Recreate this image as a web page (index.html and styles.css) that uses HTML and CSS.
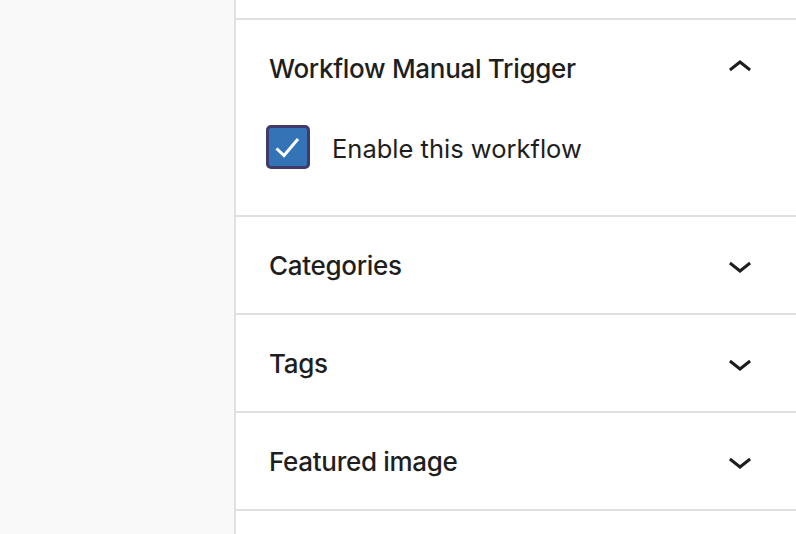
FILE: index.html
```html
<!DOCTYPE html>
<html>
<head>
<meta charset="utf-8">
<link rel="stylesheet" href="styles.css">
</head>
<body>
<div class="page">
  <div class="canvas"></div>
  <aside class="sidebar">
    <div class="top-gap"></div>
    <section class="panel open">
      <div class="panel-header">
        <span class="panel-title">Workflow Manual Trigger</span>
        <svg class="chev" viewBox="0 0 24 24" width="48" height="48"><path d="M6.5 12.4L12 8l5.5 4.4-.9 1.2L12 10l-4.6 3.6z"/></svg>
      </div>
      <div class="panel-body">
        <label class="check-row">
          <span class="checkbox">
            <svg viewBox="0 0 38 38" width="38" height="38"><polyline points="7.5,20.5 15,27.5 29,11" fill="none" stroke="#fff" stroke-width="3"/></svg>
          </span>
          <span class="check-label">Enable this workflow</span>
        </label>
      </div>
    </section>
    <section class="panel">
      <div class="panel-header">
        <span class="panel-title">Categories</span>
        <svg class="chev" viewBox="0 0 24 24" width="48" height="48"><path d="M17.5 11.6L12 16l-5.5-4.4.9-1.2L12 14l4.6-3.6z"/></svg>
      </div>
    </section>
    <section class="panel">
      <div class="panel-header">
        <span class="panel-title">Tags</span>
        <svg class="chev" viewBox="0 0 24 24" width="48" height="48"><path d="M17.5 11.6L12 16l-5.5-4.4.9-1.2L12 14l4.6-3.6z"/></svg>
      </div>
    </section>
    <section class="panel">
      <div class="panel-header">
        <span class="panel-title">Featured image</span>
        <svg class="chev" viewBox="0 0 24 24" width="48" height="48"><path d="M17.5 11.6L12 16l-5.5-4.4.9-1.2L12 14l4.6-3.6z"/></svg>
      </div>
    </section>
    <section class="panel"></section>
  </aside>
</div>
</body>
</html>
```

FILE: styles.css
```css
html, body {
  margin: 0;
  padding: 0;
  width: 796px;
  height: 534px;
  overflow: hidden;
  background: #fff;
}
.page {
  display: flex;
  height: 534px;
  font-family: Inter, "Noto Sans", sans-serif;
  color: #1e1e1e;
}
.canvas {
  width: 234px;
  flex: none;
  background: #f9f9f9;
  border-right: 2px solid #e0e0e0;
}
.sidebar {
  flex: 1;
  background: #fff;
  display: flex;
  flex-direction: column;
}
.top-gap {
  height: 18px;
}
.panel {
  border-top: 2px solid #e0e0e0;
}
.panel-header {
  height: 96px;
  display: flex;
  align-items: center;
  justify-content: space-between;
  padding: 1px 32px 0 33px;
  box-sizing: border-box;
}
.panel-title {
  font-size: 26px;
  font-weight: 500;
  letter-spacing: -0.3px;
}
.chev {
  fill: #1e1e1e;
  flex: none;
  margin-top: -1px;
}
.panel-body {
  padding: 9px 32px 46px 30px;
}
.check-row {
  display: flex;
  align-items: center;
  gap: 22px;
}
.checkbox {
  width: 38px;
  height: 38px;
  background: #3373b6;
  border: 3px solid #413b6d;
  border-radius: 5px;
  display: flex;
  align-items: center;
  justify-content: center;
}
.check-label {
  font-size: 25.5px;
  font-weight: 400;
  padding-top: 2px;
}
```
